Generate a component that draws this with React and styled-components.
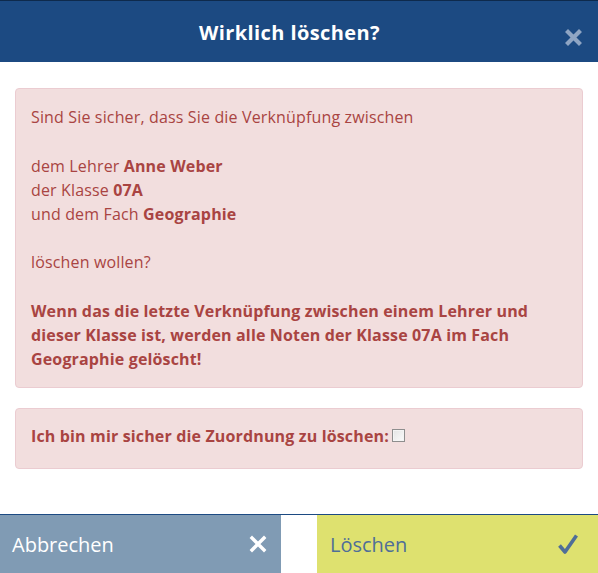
import React from 'react'
import styled, { createGlobalStyle } from 'styled-components'

const GlobalStyle = createGlobalStyle`
    html, body {
        margin: 0;
        padding: 0;
        background: #fff;
    }

    body {
        font-family: "Open Sans", "Noto Sans", sans-serif;
    }
`

const Dialog = () => {
    return (
        <Modal>
            <GlobalStyle />

            <Header>
                <Title>Wirklich löschen?</Title>
                <Close aria-label="Schließen">
                    <svg width="17" height="17" viewBox="0 0 17 17">
                        <path d="M3 3 L14 14 M14 3 L3 14" stroke="currentColor" strokeWidth="4.2" strokeLinecap="square" />
                    </svg>
                </Close>
            </Header>

            <Body>
                <Alert>
                    <p>Sind Sie sicher, dass Sie die Verknüpfung zwischen</p>
                    <p>
                        dem Lehrer <b>Anne Weber</b><br />
                        der Klasse <b>07A</b><br />
                        und dem Fach <b>Geographie</b>
                    </p>
                    <p>löschen wollen?</p>
                    <p>
                        <b>
                            Wenn das die letzte Verknüpfung zwischen einem Lehrer und dieser Klasse ist,
                            werden alle Noten der Klasse 07A im Fach Geographie gelöscht!
                        </b>
                    </p>
                </Alert>

                <Alert $compact>
                    <Confirm>
                        Ich bin mir sicher die Zuordnung zu löschen:
                        <input type="checkbox" />
                    </Confirm>
                </Alert>
            </Body>

            <Footer>
                <Action $variant="cancel">
                    Abbrechen
                    <svg width="18" height="18" viewBox="0 0 18 18">
                        <path d="M3 3 L15 15 M15 3 L3 15" stroke="currentColor" strokeWidth="3.4" strokeLinecap="square" />
                    </svg>
                </Action>
                <Action $variant="confirm">
                    Löschen
                    <svg width="22" height="22" viewBox="0 0 22 22">
                        <path d="M2.5 12.5 L8 19 L19.5 2.5" fill="none" stroke="currentColor" strokeWidth="3.6" strokeLinejoin="round" />
                    </svg>
                </Action>
            </Footer>
        </Modal>
    )
}

export default Dialog

const Modal = styled.div`
    display: flex;
    flex-direction: column;
    height: 100vh;
    width: 100%;
    overflow: hidden;
    color: #a94442;
`

const Header = styled.div`
    position: relative;
    display: flex;
    align-items: center;
    justify-content: center;
    height: 61px;
    padding-right: 19px;
    background: #1c4a82;
    border-top: 1px solid #0e2a4c;
`

const Title = styled.h3`
    margin: 0;
    padding-top: 1px;
    font-size: 20px;
    letter-spacing: 0.4px;
    font-weight: bold;
    color: #fff;
`

const Close = styled.span`
    position: absolute;
    right: 16px;
    top: 28px;
    display: flex;
    color: #8fa5c3;
`

const Body = styled.div`
    flex: 1;
    padding: 26px 15px 0;
`

const Alert = styled.div`
    background: #f2dede;
    border: 1px solid #ebccd1;
    border-radius: 4px;
    padding: ${p => (p.$compact ? '15px 15px 20px' : '16px 15px')};
    margin-bottom: 20px;
    font-size: 16px;
    letter-spacing: 0.15px;
    line-height: 24px;

    p {
        margin: 0 0 24.5px;

        &:last-child {
            margin-bottom: 0;
        }
    }

    b {
        font-weight: bold;
    }
`

const Confirm = styled.label`
    display: flex;
    align-items: center;
    gap: 3px;
    font-weight: bold;

    input {
        appearance: none;
        margin: 0;
        width: 13px;
        height: 13px;
        border: 1px solid #8e8e8e;
        background: linear-gradient(135deg, #e4e4e4, #fbfbfb);
        box-shadow: inset 0 0 0 1px #f4f4f4;
    }
`

const Footer = styled.div`
    display: flex;
    justify-content: space-between;
    border-top: 1px solid #1c4a82;
    height: 58px;
`

const Action = styled.button`
    display: flex;
    align-items: center;
    justify-content: space-between;
    width: 281px;
    height: 100%;
    border: 0;
    border-radius: 0;
    padding: ${p => (p.$variant === 'cancel' ? '0 14px 0 12px' : '0 19px 0 13px')};
    font-family: "Open Sans", "Noto Sans", sans-serif;
    font-size: 20px;
    cursor: pointer;
    background: ${p => (p.$variant === 'cancel' ? '#809bb4' : '#dee16f')};
    color: ${p => (p.$variant === 'cancel' ? '#fff' : '#4f6e98')};

    svg {
        flex: none;
    }
`
